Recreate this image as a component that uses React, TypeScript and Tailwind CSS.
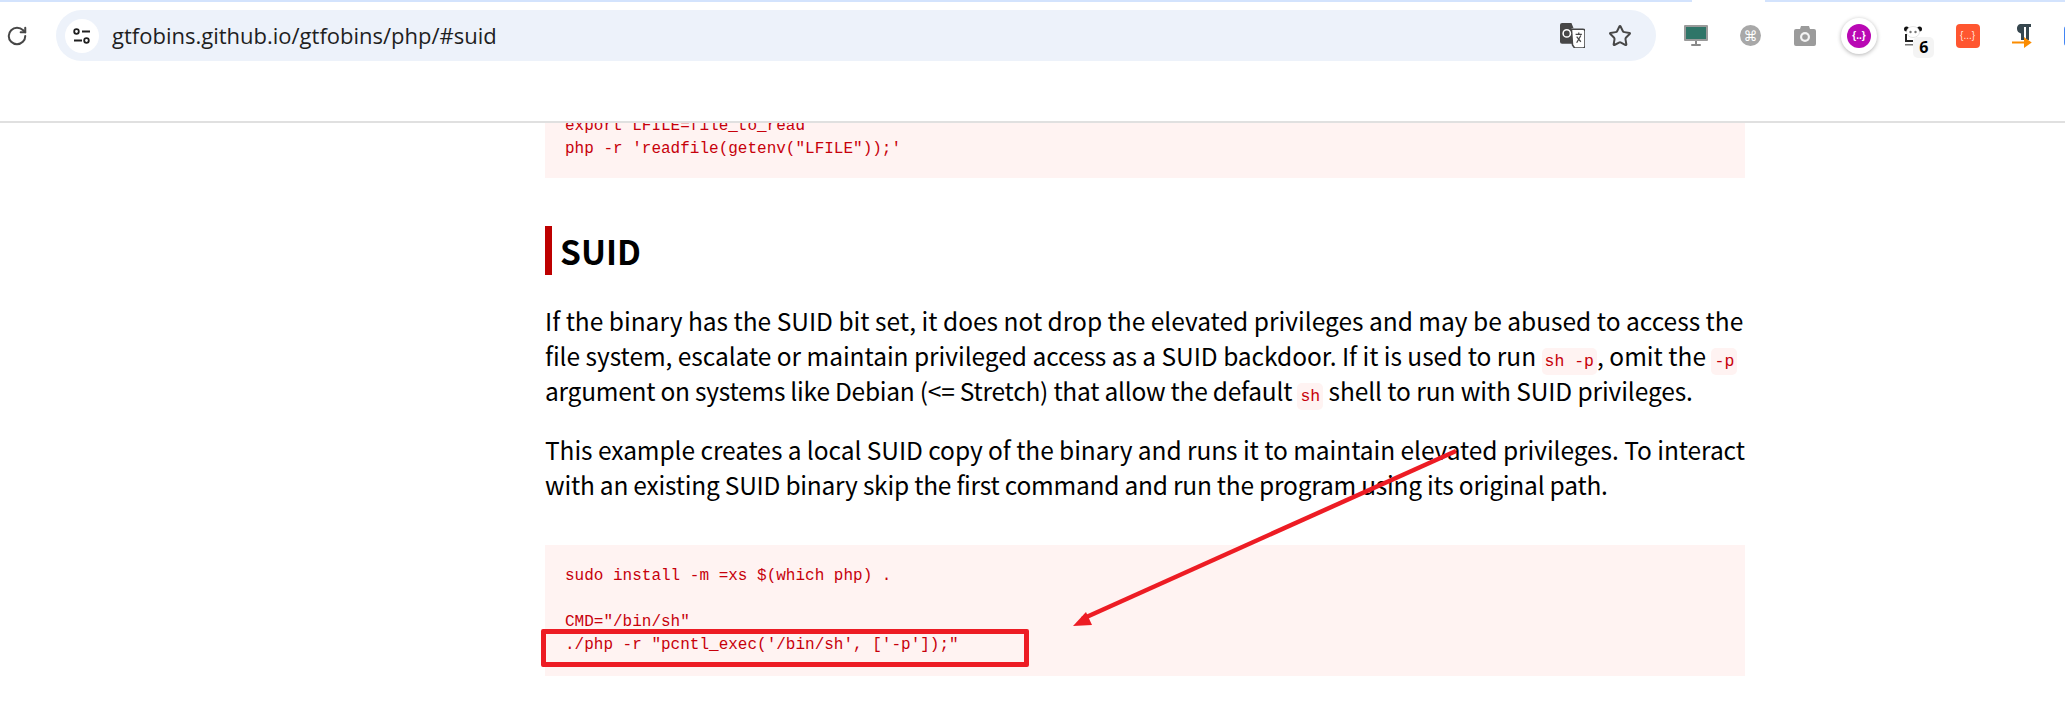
import { RotateCw, Star } from 'lucide-react';

const SUDO_CMD = `sudo install -m =xs $(which php) .

CMD="/bin/sh"
./php -r "pcntl_exec('/bin/sh', ['-p']);"`;

const READ_CMD = `export LFILE=file_to_read
php -r 'readfile(getenv("LFILE"));'`;

const InlineCode = ({ children }: { children: string }) => (
  <code className="bg-[#fff3f2] text-[#c7000b] rounded-[5px] px-[3px] py-[4px] text-[16.5px] leading-none tracking-normal whitespace-nowrap font-['Liberation_Mono',monospace]">
    {children}
  </code>
);

const ExtensionIcons = () => (
  <div className="flex items-center shrink-0">
    {/* monitor */}
    <div className="w-[54.3px] flex justify-center">
      <svg width="24" height="22" viewBox="0 0 24 22">
        <rect x="0" y="0" width="24" height="16" rx="1" fill="#9a9a9a" />
        <rect x="2" y="2" width="20" height="12" fill="#2f7568" />
        <rect x="11" y="16" width="2" height="3" fill="#8a8a8a" />
        <rect x="7" y="19" width="10" height="2" rx="1" fill="#8a8a8a" />
      </svg>
    </div>
    {/* command key */}
    <div className="w-[54.3px] flex justify-center">
      <div className="w-[21px] h-[21px] rounded-full bg-[#a8a8a8] flex items-center justify-center text-white text-[14px] leading-none font-['DejaVu_Sans',sans-serif]">
        ⌘
      </div>
    </div>
    {/* camera */}
    <div className="w-[54.3px] flex justify-center">
      <svg width="22" height="20" viewBox="0 0 22 20">
        <path d="M2 3h4l1-3h8l1 3h4a2 2 0 0 1 2 2v13a2 2 0 0 1-2 2H2a2 2 0 0 1-2-2V5a2 2 0 0 1 2-2z" fill="#9b9b9b" />
        <circle cx="11" cy="11" r="5" fill="#f2f2f2" />
        <circle cx="11" cy="11" r="2.8" fill="#9b9b9b" />
      </svg>
    </div>
    {/* json viewer, active */}
    <div className="w-[54.3px] flex justify-center">
      <div className="w-[36px] h-[36px] rounded-full bg-white shadow-[0_1px_4px_rgba(0,0,0,0.3)] flex items-center justify-center">
        <div className="w-[24px] h-[24px] rounded-full bg-[#b908b4] flex items-center justify-center text-white text-[10px] font-bold font-['Liberation_Sans',sans-serif]">
          {'{..}'}
        </div>
      </div>
    </div>
    {/* panda + badge */}
    <div className="w-[54.3px] flex justify-center">
      <div className="relative w-[18px] h-[20px]">
        <svg width="18" height="20" viewBox="0 0 18 20">
          <circle cx="2.5" cy="3" r="2.5" fill="#111" />
          <circle cx="15.5" cy="3" r="2.5" fill="#111" />
          <ellipse cx="9" cy="6" rx="6.5" ry="5.5" fill="#fff" stroke="#ccc" strokeWidth="0.5" />
          <circle cx="6.5" cy="6" r="1.2" fill="#777" />
          <circle cx="11.5" cy="6" r="1.2" fill="#777" />
          <path d="M1 8v8h8v-2H3V8z" fill="#222" />
          <rect x="1" y="18" width="8" height="1.5" fill="#777" />
        </svg>
        <div className="absolute left-[9px] top-[11px] w-[21px] h-[21px] rounded-[5px] bg-[#f4f4f4] flex items-center justify-center text-[16px] font-bold text-black font-['Open_Sans',sans-serif]">
          6
        </div>
      </div>
    </div>
    {/* orange json box */}
    <div className="w-[54.3px] flex justify-center">
      <div className="w-[24px] h-[24px] rounded-[4px] bg-[#ff5630] flex items-center justify-center text-[#ffe3da] text-[10px] font-['Liberation_Sans',sans-serif]">
        {'{...}'}
      </div>
    </div>
    {/* pilcrow with arrow */}
    <div className="w-[54.3px] flex justify-center">
      <svg width="20" height="24" viewBox="0 0 20 24">
        <path d="M8 0h11v3h-2v13h-3V3h-2v13H9V9.500A5 5 0 0 1 8 0z" fill="#37474f" />
        <path d="M0 18.500h15.500M13 15l5 3.500-5 3.500z" stroke="#fb8c00" strokeWidth="2" fill="#fb8c00" />
      </svg>
    </div>
    <div className="w-[54.3px] flex justify-center">
      <div className="w-[24px] h-[20px] rounded-[3px] bg-[#4285f4]" />
    </div>
  </div>
);

const BrowserBar = () => (
  <header className="h-[123px] border-b-2 border-[#e0e0e0] bg-white">
    <div className="flex h-[2px]">
      <div className="w-[1692px] bg-[#d3e3fd]" />
      <div className="w-[73px]" />
      <div className="flex-1 bg-[#d3e3fd]" />
    </div>
    <div className="flex items-center pt-[8px]">
      <div className="w-[56px] shrink-0 pl-[6px]">
        <RotateCw size={22} strokeWidth={2.2} className="text-[#474747]" />
      </div>
      <div className="flex items-center w-[1600px] h-[51px] shrink-0 rounded-full bg-[#edf2fa] pl-[9px] pr-[24px]">
        <div className="w-[34px] h-[34px] rounded-full bg-white flex items-center justify-center shrink-0">
          <svg width="18" height="16" viewBox="0 0 18 16" fill="none" stroke="#1f1f1f" strokeWidth="1.800">
            <circle cx="3.500" cy="3.500" r="2.300" />
            <path d="M9 3.500h8M1 12.500h8" />
            <circle cx="13.500" cy="12.500" r="2.300" />
          </svg>
        </div>
        <span className="ml-[13px] text-[22px] text-[#1f1f1f] font-['Open_Sans',sans-serif]">
          gtfobins.github.io/gtfobins/php/#suid
        </span>
        <div className="ml-auto flex items-center gap-[23px]">
          <svg width="25" height="25" viewBox="0 0 24 24">
            <path d="M2 0h9l2 5h-2l3 15H2a2 2 0 0 1-2-2V2a2 2 0 0 1 2-2z" fill="#474747" />
            <path d="M11 6h11a2 2 0 0 1 2 2v14a2 2 0 0 1-2 2h-8l-2-3z" fill="#fff" stroke="#474747" strokeWidth="1.500" />
            <circle cx="6.500" cy="10" r="3.500" fill="none" stroke="#fff" strokeWidth="1.500" />
            <path d="M15 11h6M18 9v2M16 19l4-7M16 13l4 5" stroke="#474747" strokeWidth="1.200" fill="none" />
          </svg>
          <Star size={24} strokeWidth={2} className="text-[#474747]" />
        </div>
      </div>
      <div className="w-[13px] shrink-0" />
      <ExtensionIcons />
    </div>
  </header>
);

export default function App() {
  return (
    <div className="relative h-[706px] w-[2065px] overflow-hidden bg-white text-black font-['Noto_Sans_CJK_SC',sans-serif]">
      <BrowserBar />

      <main className="h-[583px] overflow-hidden pl-[545px]">
        <article className="w-[1200px]">
          <pre className="-mt-[8px] bg-[#fff3f2] text-[#c7000b] pl-[20px] pb-[17px] text-[16px] leading-[23px] font-['Liberation_Mono',monospace]">
            {READ_CMD}
          </pre>

          <h2 className="mt-[48px] h-[49px] border-l-[7px] border-[#bd0000] pl-[8px] text-[33.5px] leading-[49px] font-bold">
            SUID
          </h2>

          <p className="mt-[28px] text-[24.5px] leading-[35px] whitespace-nowrap">
            If the binary has the SUID bit set, it does not drop the elevated privileges and may be abused to access the
            <br />
            <span className="tracking-[-0.04px]">
              file system, escalate or maintain privileged access as a SUID backdoor. If it is used to run{' '}
            </span>
            <InlineCode>sh -p</InlineCode>, omit the <InlineCode>-p</InlineCode>
            <br />
            <span className="tracking-[-0.24px]">argument on systems like Debian (&lt;= Stretch) that allow the default </span>
            <InlineCode>sh</InlineCode>
            <span className="tracking-[-0.1px]"> shell to run with SUID privileges.</span>
          </p>
          <p className="mt-[24px] text-[24.5px] leading-[35px] whitespace-nowrap">
            <span className="tracking-[-0.06px]">
              This example creates a local SUID copy of the binary and runs it to maintain elevated privileges. To interact
            </span>
            <br />
            <span className="tracking-[-0.23px]">
              with an existing SUID binary skip the first command and run the program using its original path.
            </span>
          </p>

          <pre className="mt-[43px] bg-[#fff3f2] text-[#c7000b] px-[20px] py-[19.500px] text-[16px] leading-[23px] font-['Liberation_Mono',monospace]">
            {SUDO_CMD}
          </pre>
        </article>
      </main>

      {/* red annotations drawn over the screenshot */}
      <div className="absolute left-[541px] top-[629px] w-[488px] h-[38px] rounded-[2px] border-[5px] border-[#ed1c24]" />
      <svg className="absolute left-0 top-0 pointer-events-none" width="2065" height="706">
        <line x1="1456" y1="451" x2="1082" y2="619" stroke="#ed1c24" strokeWidth="4.500" />
        <polygon points="1073,626 1086,612 1092,625" fill="#ed1c24" />
      </svg>
    </div>
  );
}
